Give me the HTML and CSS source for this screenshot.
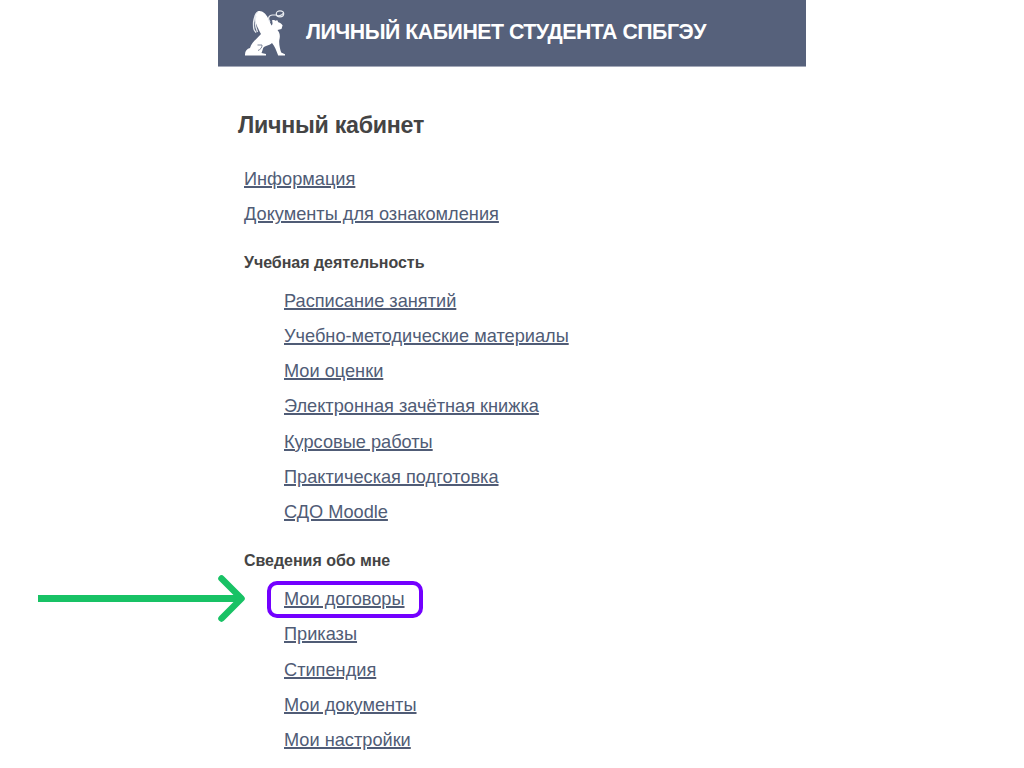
FILE: index.html
```html
<!DOCTYPE html>
<html lang="ru">
<head>
<meta charset="utf-8">
<title>Личный кабинет студента СПбГЭУ</title>
<link rel="stylesheet" href="styles.css">
</head>
<body>
<div class="page">
  <header class="header">
    <svg class="logo" viewBox="0 0 54 56" width="54" height="56" aria-hidden="true">
      <path class="solid" d="M7 50.5C7 47 9 44.8 12 44C14 38 19 34.5 23 30C21 26 17.5 20 17 15C16.6 10 18.5 7 21.5 7C25 7 28 10 30 14L33.5 21.5C35 20.5 34.5 18 34 16.5C35 15.8 37 16 38 17L39 15.8L40.3 18.2C42.3 18.8 44 20 44.6 21.3L43.5 25L39.5 26C42 29 42.3 32 41.3 36C40.8 40 42 45 43.2 48.5L47 50.2V51.5H40.2C38 46 37 42.5 34 39C31 42 26 41.5 25 44.5C24.3 46.5 24.2 47.8 23.5 49L28 50V51.5H7Z"/>
      <path class="line" d="M20 8C16 10 16.5 14 15.5 18C15.3 24 15.5 27 18.2 28.5M18 12C16.5 17 17 22 19.5 28M32 18C29.5 14.5 30.5 11 34.5 11H38C40 12.5 43.5 12 45.5 9"/>
      <ellipse class="line" cx="42" cy="9.8" rx="3.7" ry="3"/>
      <path class="fold" d="M19.5 41H24C24.2 43.5 22.5 45.5 20 46.5"/>
    </svg>
    <span class="brand">ЛИЧНЫЙ КАБИНЕТ СТУДЕНТА СПБГЭУ</span>
  </header>
  <main class="content">
    <h1 class="title">Личный кабинет</h1>
    <ul class="links top-links">
      <li><a href="#">Информация</a></li>
      <li><a href="#">Документы для ознакомления</a></li>
    </ul>
    <h2 class="section">Учебная деятельность</h2>
    <ul class="links nested study">
      <li><a href="#">Расписание занятий</a></li>
      <li><a href="#">Учебно-методические материалы</a></li>
      <li><a href="#">Мои оценки</a></li>
      <li><a href="#">Электронная зачётная книжка</a></li>
      <li><a href="#">Курсовые работы</a></li>
      <li><a href="#">Практическая подготовка</a></li>
      <li><a href="#">СДО Moodle</a></li>
    </ul>
    <h2 class="section">Сведения обо мне</h2>
    <ul class="links nested about">
      <li class="marked"><a href="#">Мои договоры</a>
        <svg class="arrow" viewBox="0 0 210 50" width="210" height="50" aria-hidden="true">
          <path d="M0 24.5H202"/><path class="head" d="M183.5 4.5L203.5 24.5L183.5 44.5"/>
        </svg>
        <span class="highlight"></span>
      </li>
      <li><a href="#">Приказы</a></li>
      <li><a href="#">Стипендия</a></li>
      <li><a href="#">Мои документы</a></li>
      <li><a href="#">Мои настройки</a></li>
    </ul>
  </main>
</div>
</body>
</html>
```

FILE: styles.css
```css
* { box-sizing: border-box; }
body {
  margin: 0;
  height: 768px;
  overflow: hidden;
  background: #fff;
  color: #444;
  font-family: "Liberation Sans", Arial, sans-serif;
}
.page { width: 588px; margin: 0 auto; }
.header {
  height: 67px;
  display: flex;
  align-items: flex-start;
  padding: 4px 0 0 20px;
  background: #56617b;
  border-bottom: 1px solid #a3a8b8;
}
.logo { flex: none; }
.logo .solid { fill: #fff; }
.logo .line { fill: none; stroke: #e8ebf0; stroke-width: 1.2; }
.logo .fold { fill: none; stroke: #7d869a; stroke-width: 1; }
.brand {
  margin: 14px 0 0 14px;
  font-size: 21.3px;
  line-height: 28px;
  letter-spacing: -0.48px;
  font-weight: bold;
  color: #fff;
  white-space: nowrap;
}
.content { padding: 42px 20px 0; }
.title { margin: 0; font-size: 23.2px; line-height: 32px; letter-spacing: -0.25px; }
.links {
  list-style: none;
  margin: 0;
  padding: 0 0 0 6px;
  font-size: 18.2px;
  line-height: 35.25px;
}
.links li { height: 35.25px; white-space: nowrap; }
.links a {
  color: #505c76;
  text-decoration: underline;
  text-decoration-thickness: 1.6px;
  text-underline-offset: 1px;
}
.top-links { padding-top: 21px; }
.section {
  margin: 0;
  padding: 16.5px 0 0 6px;
  font-size: 16px;
  letter-spacing: -0.03px;
  line-height: 28px;
}
.links.nested { padding-left: 46px; }
.links.study { padding-top: 6.6px; }
.section ~ .section { padding-top: 17px; }
.links.about { padding-top: 6.4px; line-height: 35.4px; }
.links.about li { height: 35.4px; }
.marked { position: relative; }
.highlight {
  position: absolute;
  left: -17px;
  top: -1px;
  width: 156px;
  height: 37px;
  border: 4px solid #7300ff;
  border-radius: 10px;
  pointer-events: none;
}
.arrow { position: absolute; left: -246px; top: -8px; fill: none; stroke: #18c265; stroke-width: 7; }
.arrow .head { stroke-width: 6.5; stroke-linecap: round; stroke-linejoin: round; }
```
